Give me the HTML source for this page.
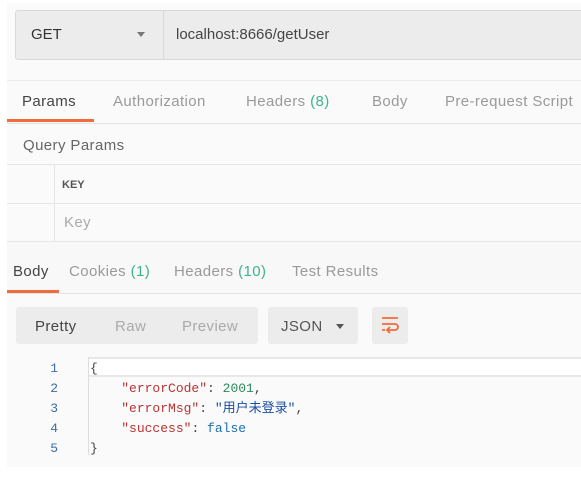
<html><head><style>
body{margin:0;width:581px;height:502px;background:#fff;position:relative;overflow:hidden;font-family:"Liberation Sans","Noto Sans CJK SC",sans-serif}
.a{position:absolute;white-space:nowrap}
.mono{font-family:"Liberation Mono","Noto Sans CJK SC",monospace;font-size:13px}
.t{font-size:15px;letter-spacing:0.4px;color:#9a9a9a}
.g{color:#3db48a}
</style></head><body>
<div class="a" style="left:7px;top:3px;width:574px;height:464px;background:#fafafa"></div>
<div class="a" style="left:15px;top:10px;width:570px;height:48px;background:#ececec;border:1px solid #d8d8d8;border-radius:3px"></div>
<div class="a" style="left:163px;top:11px;width:1px;height:48px;background:#d8d8d8"></div>
<div class="a" style="left:31px;top:26px;font-size:15px;color:#333">GET</div>
<div class="a" style="left:137px;top:32px;width:0;height:0;border-left:4px solid transparent;border-right:4px solid transparent;border-top:5px solid #777"></div>
<div class="a" style="left:176px;top:26px;font-size:15px;color:#444">localhost:8666/getUser</div>
<div class="a" style="left:7px;top:80px;width:574px;height:1px;background:#eaeaea"></div>
<div class="a" style="left:7px;top:123px;width:574px;height:1px;background:#e4e4e4;"></div>
<div class="a" style="left:7px;top:119px;width:87px;height:3px;background:#f26b3a"></div>
<div class="a t" style="left:22px;top:93px;color:#444">Params</div>
<div class="a t" style="left:113px;top:93px">Authorization</div>
<div class="a t" style="left:246px;top:93px">Headers <span class="g">(8)</span></div>
<div class="a t" style="left:372px;top:93px">Body</div>
<div class="a t" style="left:445px;top:93px">Pre-request Script</div>
<div class="a t" style="left:23px;top:137px;color:#666">Query Params</div>
<div class="a" style="left:7px;top:164px;width:574px;height:1px;background:#e6e6e6"></div>
<div class="a" style="left:7px;top:203px;width:574px;height:1px;background:#e6e6e6"></div>
<div class="a" style="left:7px;top:241px;width:574px;height:1px;background:#e6e6e6"></div>
<div class="a" style="left:54px;top:165px;width:1px;height:77px;background:#e6e6e6"></div>
<div class="a" style="left:62px;top:179px;font-size:11px;font-weight:bold;color:#555">KEY</div>
<div class="a t" style="left:64px;top:214px;color:#aaa">Key</div>
<div class="a" style="left:7px;top:242px;width:574px;height:51px;background:#f8f8f8"></div>
<div class="a" style="left:7px;top:293px;width:574px;height:1px;background:#e4e4e4"></div>
<div class="a" style="left:7px;top:290px;width:52px;height:3px;background:#f26b3a"></div>
<div class="a t" style="left:13px;top:263px;color:#444">Body</div>
<div class="a t" style="left:69px;top:263px">Cookies <span class="g">(1)</span></div>
<div class="a t" style="left:174px;top:263px">Headers <span class="g">(10)</span></div>
<div class="a t" style="left:292px;top:263px">Test Results</div>
<div class="a" style="left:16px;top:307px;width:242px;height:37px;background:#ececec;border-radius:3px"></div>
<div class="a t" style="left:35px;top:318px;color:#444">Pretty</div>
<div class="a t" style="left:115px;top:318px;color:#aaa">Raw</div>
<div class="a t" style="left:182px;top:318px;color:#aaa">Preview</div>
<div class="a" style="left:268px;top:307px;width:90px;height:37px;background:#ececec;border-radius:3px"></div>
<div class="a t" style="left:281px;top:318px;color:#555">JSON</div>
<div class="a" style="left:336px;top:324px;width:0;height:0;border-left:4px solid transparent;border-right:4px solid transparent;border-top:5px solid #555"></div>
<div class="a" style="left:372px;top:307px;width:36px;height:37px;background:#ececec;border-radius:3px"></div>
<svg class="a" style="left:380px;top:315px" width="20" height="20" viewBox="0 0 20 20" fill="none" stroke="#f26b3a" stroke-width="1.8"><path d="M2 3H18M2 9H15a3 3 0 0 1 0 6H8M10 12l-3 3 3 3M2 15H5"/></svg>
<div class="a" style="left:88px;top:357px;width:493px;height:20px;background:#fff;border-top:2px solid #e8e8e8;border-bottom:2px solid #e8e8e8;box-sizing:border-box"></div>
<div class="a" style="left:88px;top:357px;width:1px;height:98px;background:#ddd"></div>
<div class="a mono" style="left:48px;top:359px;line-height:20px;color:#3a6ea5;text-align:right;width:10px">1<br>2<br>3<br>4<br>5</div>
<div class="a mono" style="left:90px;top:359px;line-height:20px;white-space:pre;color:#444">{
    <span style="color:#b33">"errorCode"</span>: <span style="color:#2a8a5a">2001</span>,
    <span style="color:#b33">"errorMsg"</span>: <span style="color:#1a4fa0">"用户未登录"</span>,
    <span style="color:#b33">"success"</span>: <span style="color:#1a6fb0">false</span>
}</div>
</body></html>
